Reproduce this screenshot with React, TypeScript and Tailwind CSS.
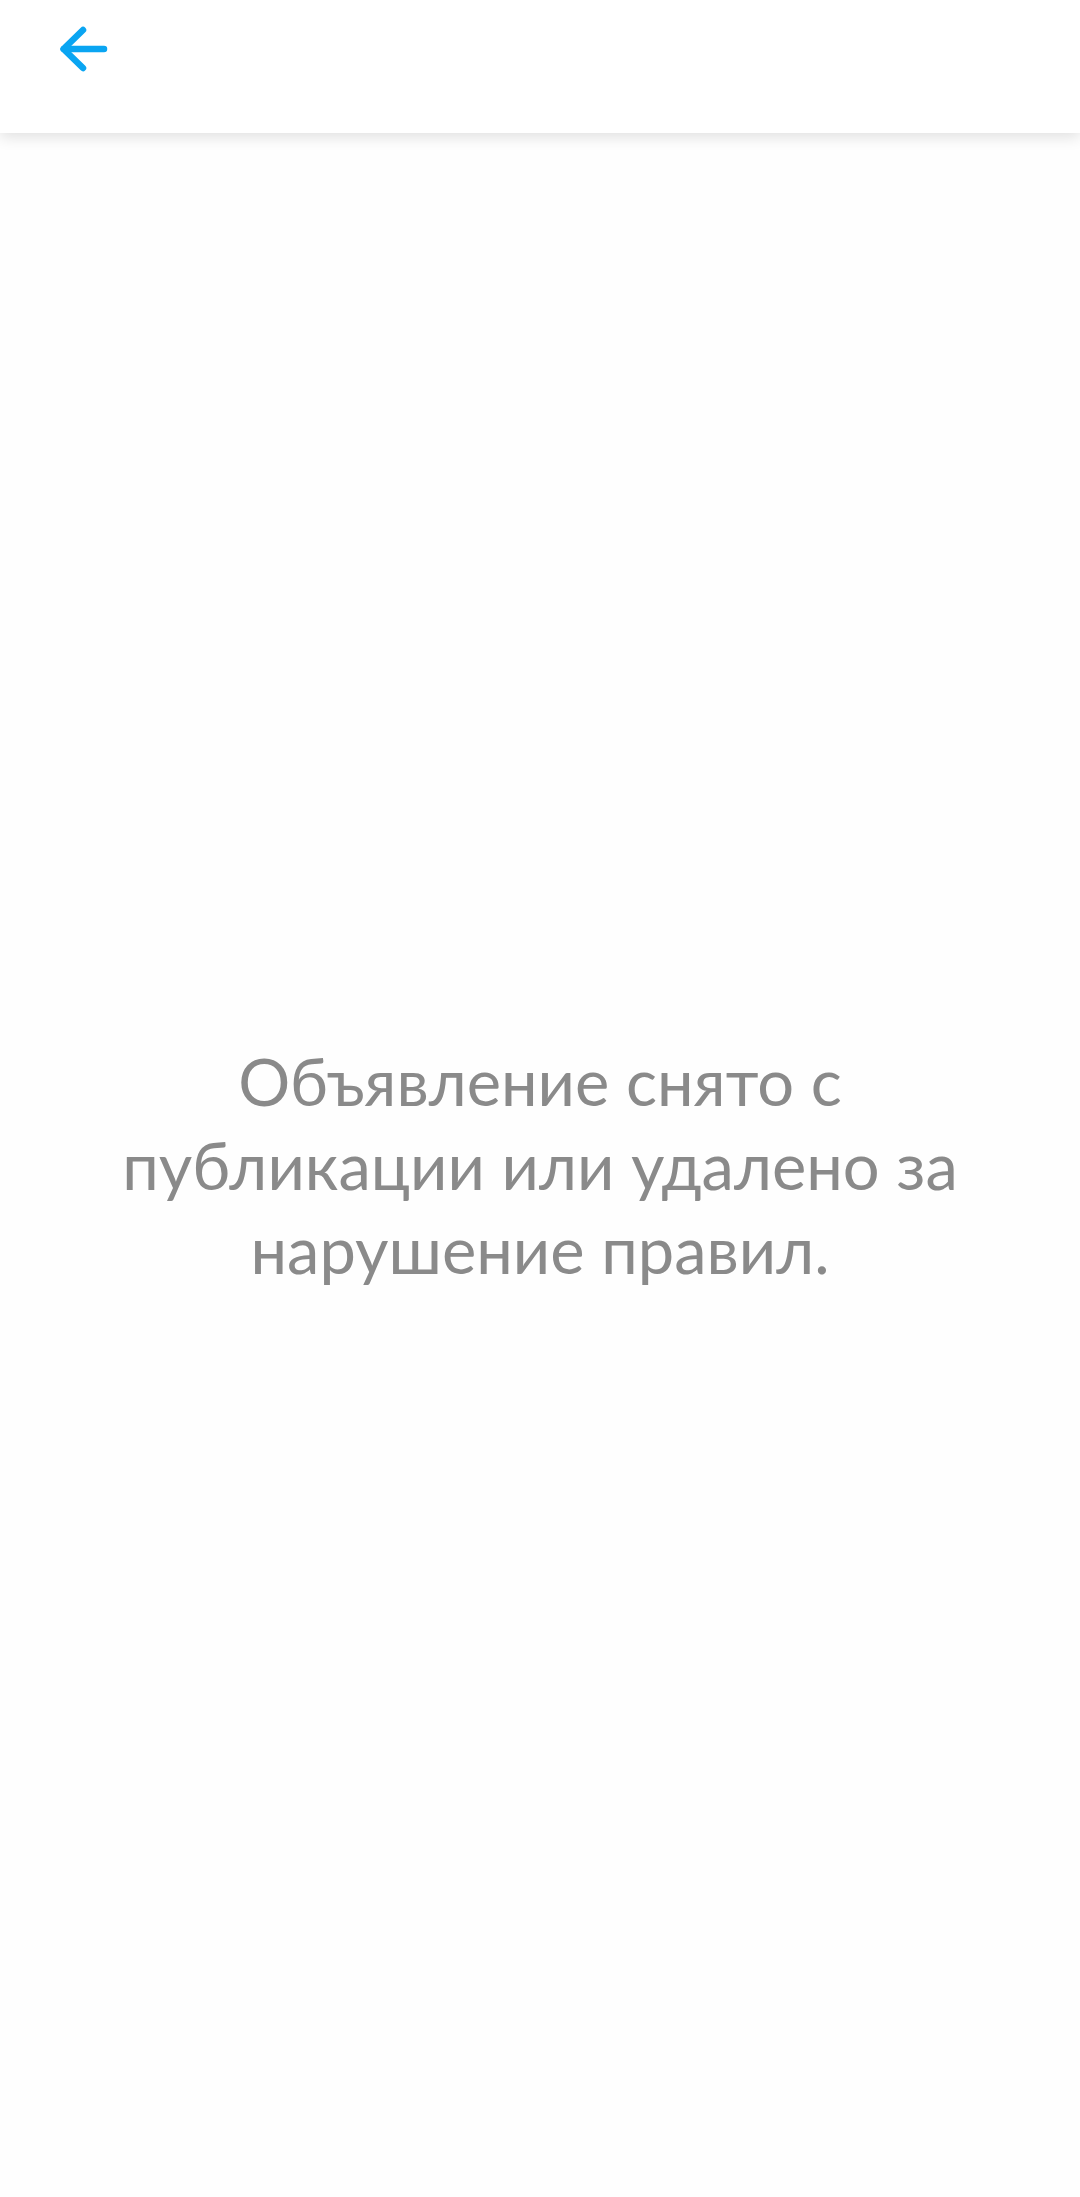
import React from "react";

function BackArrow() {
  return (
    <svg width="56" height="56" viewBox="0 0 56 56" fill="none" stroke="#0aa5f2" strokeWidth="6.5" strokeLinecap="round" strokeLinejoin="round">
      <path d="M48 28H8" />
      <path d="M27 9L7.5 28L27 47" />
    </svg>
  );
}

export default function App() {
  return (
    <div className="flex h-[2197px] w-[1080px] flex-col bg-[#fefefe]" style={{ fontFamily: "Lato, 'Noto Sans', sans-serif" }}>
      {/* Top bar */}
      <header className="relative z-10 flex h-[133px] shrink-0 items-start bg-white px-[56px] pt-[21px] shadow-[0_4px_14px_rgba(0,0,0,0.12)]">
        <BackArrow />
      </header>
      {/* Message */}
      <main className="flex flex-1 items-center justify-center px-[100px]">
        <p className="text-center text-[65px] leading-[84px] text-[#8a8a8a]">
          Объявление снято с публикации или удалено за нарушение правил.
        </p>
      </main>
    </div>
  );
}
